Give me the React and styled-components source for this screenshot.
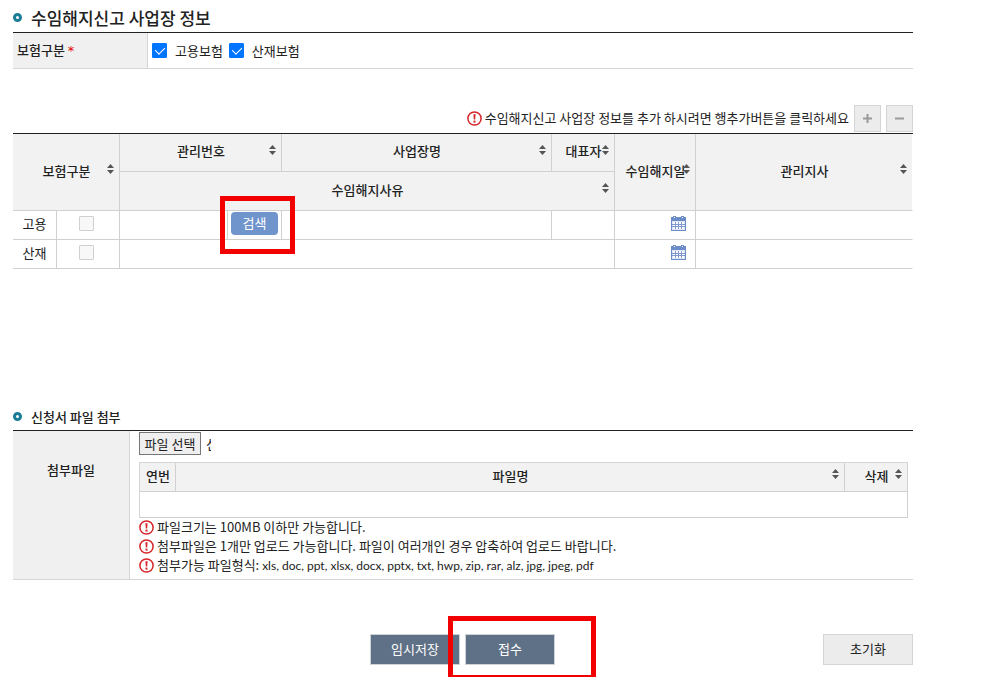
import React, { useState } from "react";
import styled, { createGlobalStyle } from "styled-components";

const sites = [
	{ id: "employ", label: "고용" },
	{ id: "accident", label: "산재" },
];

const fileNotes = [
	{ text: "파일크기는 100MB 이하만 가능합니다." },
	{ text: "첨부파일은 1개만 업로드 가능합니다. 파일이 여러개인 경우 압축하여 업로드 바랍니다." },
	{
		text: "첨부가능 파일형식: ",
		types: "xls, doc, ppt, xlsx, docx, pptx, txt, hwp, zip, rar, alz, jpg, jpeg, pdf",
	},
];

const SortIcon = () => (
	<Sort viewBox="0 0 7 10" aria-hidden="true">
		<path d="M3.5 0L7 4H0z" />
		<path d="M3.5 10L7 6H0z" />
	</Sort>
);

const AlertIcon = () => (
	<Alert viewBox="0 0 15 15" aria-hidden="true">
		<circle cx="7.5" cy="7.5" r="6.6" fill="#fff" stroke="#d6252b" strokeWidth="1.5" />
		<path d="M6.4 3.2h2.2l-.4 5.4H6.8z" fill="#d6252b" />
		<rect x="6.5" y="9.6" width="2" height="2" fill="#d6252b" />
	</Alert>
);

const CalendarIcon = () => (
	<svg width="15" height="15" viewBox="0 0 15 15" aria-hidden="true">
		<path d="M0 1h15v14H0z" fill="#6b8cc7" />
		<path d="M2 0h3v3H2zM10 0h3v3h-3z" fill="#6b8cc7" />
		<path d="M3 1h1v1H3zM11 1h1v1h-1z" fill="#fff" />
		<path d="M1 5h13v9H1z" fill="#dce6f7" />
		<path
			d="M2 6h2v2H2zM5 6h2v2H5zM8 6h2v2H8zM11 6h2v2h-2zM2 9h2v1H2zM5 9h2v1H5zM8 9h2v1H8zM11 9h2v1h-2zM2 11h2v2H2zM5 11h2v2H5zM8 11h2v2H8zM11 11h2v2h-2z"
			fill="#fff"
		/>
		<path
			d="M1 8h13v1H1zM1 10h13v1H1zM4 6h1v7H4zM7 6h1v7H7zM10 6h1v7h-1z"
			fill="#7f9bd0"
		/>
	</svg>
);

const App = () => {
	const [checked, setChecked] = useState({ employ: true, accident: true });

	const toggle = (id) => setChecked({ ...checked, [id]: !checked[id] });

	return (
		<Page>
			<GlobalStyle />

			{/* workplace info */}
			<Title $large>
				<Bullet />
				수임해지신고 사업장 정보
			</Title>
			<FormRow>
				<FormLabel>
					보험구분 <Required>*</Required>
				</FormLabel>
				<Choices>
					{sites.map((site) => (
						<Choice key={site.id}>
							<Check
								type="checkbox"
								checked={checked[site.id]}
								onChange={() => toggle(site.id)}
							/>
							{site.label}보험
						</Choice>
					))}
				</Choices>
			</FormRow>

			<Toolbar>
				<Note>
					<AlertIcon />
					<NoteText>
						수임해지신고 사업장 정보를 추가 하시려면 행추가버튼을 클릭하세요
					</NoteText>
				</Note>
				<SquareButton type="button" aria-label="행 추가">
					<svg width="9" height="9" viewBox="0 0 9 9">
						<path d="M4.5 0v9M0 4.5h9" stroke="#999" strokeWidth="2" />
					</svg>
				</SquareButton>
				<SquareButton type="button" aria-label="행 삭제">
					<svg width="9" height="9" viewBox="0 0 9 9">
						<path d="M0 4.5h9" stroke="#999" strokeWidth="2" />
					</svg>
				</SquareButton>
			</Toolbar>

			<Grid>
				<colgroup>
					<Col $w="44px" />
					<Col $w="63px" />
					<Col $w="108px" />
					<Col $w="54px" />
					<Col $w="30%" />
					<Col $w="63px" />
					<Col $w="81px" />
					<Col />
				</colgroup>
				<thead>
					<tr>
						<Th $h={38} colSpan={2} rowSpan={2}>보험구분<SortIcon /></Th>
						<Th $h={38} colSpan={2}>관리번호<SortIcon /></Th>
						<Th $h={38}>사업장명<SortIcon /></Th>
						<Th $h={38}>대표자<SortIcon /></Th>
						<Th $h={38} rowSpan={2}>수임해지일<SortIcon /></Th>
						<Th $h={38} rowSpan={2} $last>관리지사<SortIcon /></Th>
					</tr>
					<tr>
						<Th $h={39} colSpan={4}>수임해지사유<SortIcon /></Th>
					</tr>
				</thead>
				<tbody>
					{sites.map((site, i) => (
						<tr key={site.id}>
							<Td>{site.label}</Td>
							<CheckTd>
								<Check type="checkbox" disabled aria-label={site.label} />
							</CheckTd>
							{i === 0 ? (
								<>
									<Td />
									<Td>
										<SearchWrap>
											<SearchButton type="button">검색</SearchButton>
											<SearchMark />
										</SearchWrap>
									</Td>
									<Td />
									<Td />
								</>
							) : (
								<Td colSpan={4} />
							)}
							<Td>
								<DateButton type="button" aria-label="날짜 선택">
									<CalendarIcon />
								</DateButton>
							</Td>
							<Td $last />
						</tr>
					))}
				</tbody>
			</Grid>

			{/* file attachment */}
			<FileSection>
				<Title>
					<Bullet />
					신청서 파일 첨부
				</Title>
				<FormRow>
					<FileLabel>첨부파일</FileLabel>
					<FileBody>
						<Picker>
							<HiddenInput type="file" id="attach" />
							<PickButton htmlFor="attach">파일 선택</PickButton>
							<PickName>선택된 파일 없음</PickName>
						</Picker>
						<FileGrid>
							<colgroup>
								<Col $w="36px" />
								<Col />
								<Col $w="63px" />
							</colgroup>
							<thead>
								<tr>
									<Th $h={29}>연번</Th>
									<Th $h={29}>파일명<SortIcon /></Th>
									<Th $h={29}>삭제<SortIcon /></Th>
								</tr>
							</thead>
							<tbody>
								<tr>
									<EmptyTd colSpan={3} />
								</tr>
							</tbody>
						</FileGrid>
						{fileNotes.map((note) => (
							<Note key={note.text}>
								<AlertIcon />
								<NoteText>
									{note.text}
									{note.types ? <FileTypes>{note.types}</FileTypes> : null}
								</NoteText>
							</Note>
						))}
					</FileBody>
				</FormRow>
			</FileSection>

			<Footer>
				<div />
				<Actions>
					<Button type="button" $primary>임시저장</Button>
					<SubmitWrap>
						<Button type="button" $primary>접수</Button>
						<SubmitMark />
					</SubmitWrap>
				</Actions>
				<ResetCell>
					<Button type="button">초기화</Button>
				</ResetCell>
			</Footer>
		</Page>
	);
};

const GlobalStyle = createGlobalStyle`
	* {
		box-sizing: border-box;
	}

	body {
		margin: 0;
		background: #fff;
		color: #222;
		font-family: "Noto Sans CJK KR", "Noto Sans", sans-serif;
		font-size: 13px;
		line-height: 19px;
	}

	button {
		font: inherit;
		padding: 0;
		cursor: pointer;
	}
`;

const Page = styled.main`
	padding: 0 89px 0 13px;
`;

const Title = styled.h2`
	display: flex;
	align-items: center;
	gap: 9px;
	height: ${(props) => (props.$large ? "32px" : "28px")};
	margin: 0;
	padding-top: ${(props) => (props.$large ? "2px" : "0")};
	font-size: ${(props) => (props.$large ? "17px" : "13px")};
	font-weight: 500;
`;

const Bullet = styled.span`
	width: 9px;
	height: 9px;
	border: 3px solid #1a7c96;
	border-radius: 50%;
`;

const FormRow = styled.div`
	display: flex;
	border-top: 1px solid #222;
	border-bottom: 1px solid #d5d5d5;
`;

const FormLabel = styled.div`
	width: 135px;
	padding: 7px 4px 9px;
	border-right: 1px solid #d5d5d5;
	background: #f0f0f0;
	font-weight: 500;
`;

const Required = styled.span`
	color: #e60000;
	font-family: "DejaVu Sans", sans-serif;
	font-weight: 400;
	line-height: 1;
`;

const Choices = styled.div`
	display: flex;
	align-items: center;
	gap: 6px;
	padding: 0 4px;
`;

const Choice = styled.label`
	display: flex;
	align-items: center;
	gap: 8px;
`;

const Check = styled.input`
	appearance: none;
	position: relative;
	width: 15px;
	height: 15px;
	margin: 0;
	border: 1px solid #767676;
	border-radius: 1px;
	background: #fff;

	&:checked {
		border-color: #0075ff;
		background: #0075ff;
	}

	&:checked::after {
		content: "";
		position: absolute;
		top: 1px;
		left: 4px;
		width: 5px;
		height: 8px;
		border: solid #fff;
		border-width: 0 1px 1px 0;
		transform: rotate(45deg);
	}

	&:disabled {
		border-color: #d0d0d0;
		background: #f8f8f8;
	}
`;

const Toolbar = styled.div`
	display: flex;
	justify-content: flex-end;
	align-items: center;
	gap: 5px;
	margin-top: 36px;
	padding-bottom: 1px;
`;

const Note = styled.div`
	display: flex;
	align-items: center;
	gap: 3px;
	height: 19px;
`;

const NoteText = styled.span`
	padding-bottom: 3px;
`;

const FileTypes = styled.span`
	font-family: Lato, sans-serif;
	font-size: 12px;
	line-height: 1;
`;

const Alert = styled.svg`
	flex: none;
	width: 15px;
	height: 15px;
`;

const SquareButton = styled.button`
	display: flex;
	align-items: center;
	justify-content: center;
	width: 27px;
	height: 27px;
	border: 1px solid #d5d5d5;
	background: #ececec;
`;

const Grid = styled.table`
	width: 100%;
	table-layout: fixed;
	border-collapse: separate;
	border-spacing: 0;
	border-top: 1px solid #222;
`;

const Col = styled.col`
	width: ${(props) => props.$w || "auto"};
`;

const Th = styled.th`
	position: relative;
	height: ${(props) => props.$h}px;
	padding: 0 0 4px 1px;
	border-right: 1px solid ${(props) => (props.$last ? "#fff" : "#d0d0d0")};
	border-bottom: 1px solid #d0d0d0;
	background: #f2f2f2;
	font-weight: 500;
	white-space: nowrap;
`;

const Sort = styled.svg`
	position: absolute;
	top: calc(50% - 8px);
	right: 5px;
	width: 7px;
	height: 10px;
	fill: #555;
`;

const Td = styled.td`
	height: 29px;
	padding: 0 0 3px;
	border-right: 1px solid ${(props) => (props.$last ? "#fff" : "#d0d0d0")};
	border-bottom: 1px solid #d0d0d0;
	text-align: center;
`;

const CheckTd = styled(Td)`
	padding-right: 3px;
	line-height: 0;
`;

const SearchWrap = styled.div`
	position: relative;
	display: flex;
	justify-content: center;
`;

const SearchButton = styled.button`
	width: 47px;
	height: 23px;
	padding-bottom: 2px;
	border: none;
	border-radius: 4px;
	background: #7094cc;
	color: #fff;
`;

const Mark = styled.span`
	position: absolute;
	border: 5px solid #f20000;
	pointer-events: none;
`;

const SearchMark = styled(Mark)`
	top: -16px;
	left: -8px;
	width: 75px;
	height: 58px;
`;

const DateButton = styled.button`
	display: flex;
	margin: 0 9px 0 auto;
	border: none;
	background: none;
`;

const FileSection = styled.section`
	margin-top: 133px;
`;

const FileLabel = styled.div`
	width: 117px;
	padding-top: 29px;
	border-right: 1px solid #d5d5d5;
	background: #f0f0f0;
	font-weight: 500;
	text-align: center;
`;

const FileBody = styled.div`
	flex: 1;
	min-width: 0;
	padding: 1px 5px 4px 9px;
`;

const Picker = styled.div`
	display: flex;
	align-items: center;
	gap: 5px;
	margin-bottom: 7px;
`;

const HiddenInput = styled.input`
	position: absolute;
	width: 1px;
	height: 1px;
	opacity: 0;
`;

const PickButton = styled.label`
	width: 62px;
	height: 23px;
	border: 1px solid #767676;
	background: #efefef;
	line-height: 21px;
	text-align: center;
`;

const PickName = styled.span`
	width: 5px;
	overflow: hidden;
	white-space: nowrap;
`;

const FileGrid = styled(Grid)`
	border-top: 1px solid #d5d5d5;
	border-left: 1px solid #d5d5d5;
`;

const EmptyTd = styled(Td)`
	height: 26px;
`;

const Footer = styled.footer`
	display: grid;
	grid-template-columns: 1fr auto 1fr;
	height: 61px;
	margin-top: 36px;
	padding-top: 18px;
	overflow: hidden;
`;

const Actions = styled.div`
	display: flex;
	gap: 5px;
	padding-right: 1px;
`;

const SubmitWrap = styled.div`
	position: relative;
`;

const SubmitMark = styled(Mark)`
	top: -18px;
	left: -17px;
	width: 148px;
	height: 64px;
`;

const ResetCell = styled.div`
	text-align: right;
`;

const Button = styled.button`
	width: 90px;
	height: 31px;
	padding-bottom: 2px;
	border: 1px solid ${(props) => (props.$primary ? "#cdd3d6" : "#d5d5d5")};
	background: ${(props) => (props.$primary ? "#5f7186" : "#ececec")};
	color: ${(props) => (props.$primary ? "#fff" : "#222")};
`;

export default App;
